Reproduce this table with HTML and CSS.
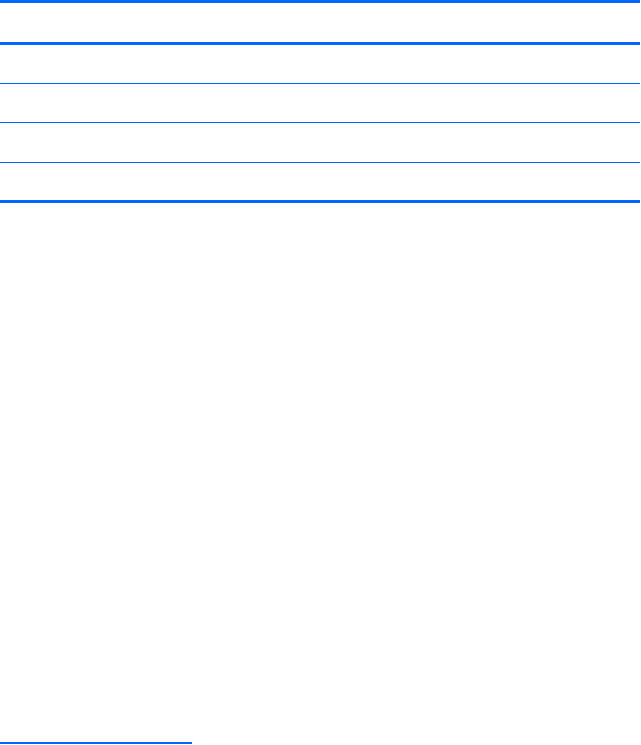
FILE: index.html
```html
<!DOCTYPE html>
<html lang="en">
<head>
    <meta charset="UTF-8">
    <meta name="viewport" content="width=device-width, initial-scale=1.0">
    <title>Table</title>
    <link rel="stylesheet" href="styles.css">
</head>
<body>
    <div class="page">
        <div class="spec-table">
            <div class="head-row"></div>
            <div class="body-row row-a"></div>
            <div class="body-row row-b"></div>
            <div class="body-row row-c"></div>
            <div class="body-row row-d"></div>
        </div>

        <div class="footnote-rule"></div>
    </div>
</body>
</html>
```

FILE: styles.css
```css
body {
    margin: 0;
    font-family: "Liberation Sans", Arial, sans-serif;
    background: #ffffff;
    color: #000000;
}
.page {
    display: flex;
    flex-direction: column;
    min-height: 745px;
}
.spec-table {
    display: flex;
    flex-direction: column;
    margin-right: 1px;
    border-top: 3px solid #0066ff;
    border-bottom: 3px solid #0066ff;
}
.head-row {
    height: 39px;
    border-bottom: 3px solid #0066ff;
}
.body-row {
    border-bottom: 1px solid #0066ff;
}
.body-row:last-child {
    border-bottom: none;
}
.row-a { height: 38px; }
.row-b { height: 38px; }
.row-c { height: 39px; }
.row-d { height: 37px; }
.footnote-rule {
    margin-top: auto;
    margin-bottom: 1px;
    width: 192px;
    height: 2px;
    background: #0066ff;
}
```
